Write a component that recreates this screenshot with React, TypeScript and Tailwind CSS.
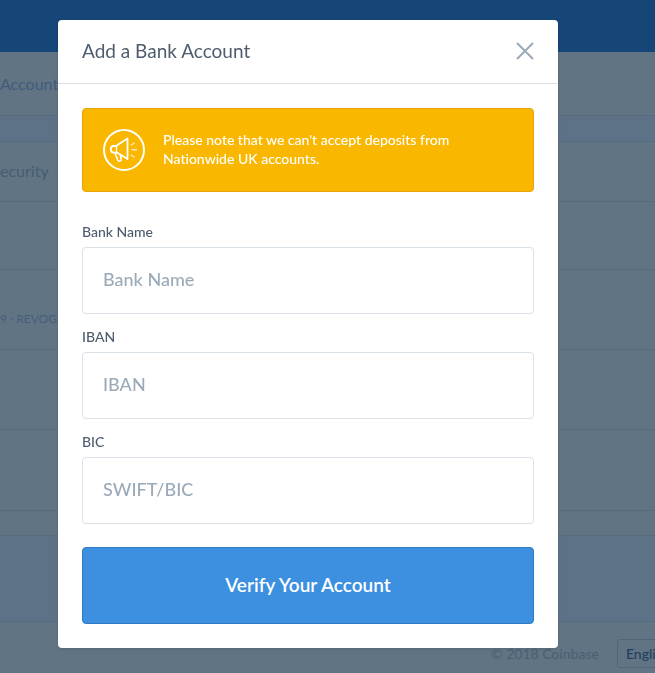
import React from 'react';

const fields = [
  { id: 'bank-name', label: 'Bank Name', placeholder: 'Bank Name' },
  { id: 'iban', label: 'IBAN', placeholder: 'IBAN' },
  { id: 'bic', label: 'BIC', placeholder: 'SWIFT/BIC' },
];

function MegaphoneIcon() {
  return (
    <svg className="size-[42px] shrink-0" viewBox="0 0 42 42" fill="none" stroke="white" strokeLinecap="round" strokeLinejoin="round" aria-hidden="true">
      <circle cx="21" cy="21" r="20" strokeWidth="2" />
      <path d="M13 17h-2.200a3 3 0 0 0-3 3v.6a3 3 0 0 0 3 3H14l10.500 6.400V9.500L13 17Z" strokeWidth="1.800" />
      <path d="M13.500 17v6.600" strokeWidth="1.300" />
      <path d="m12 24 2.600 6.800c1 2.200 4 1.500 3.600-1L17.200 25.500" strokeWidth="1.600" />
      <path d="m28 16 3.300-2M29 20.800h4.500M28 26l3.300 2" strokeWidth="1.400" strokeOpacity=".75" />
    </svg>
  );
}

function AccountsPage() {
  return (
    <div className="flex h-screen flex-col overflow-hidden bg-[#5d7286]">
      <header className="h-[52px] shrink-0 bg-[#154677]" />
      <nav className="flex h-16 shrink-0 items-center border-b border-[#566b80] bg-[#617484] text-base text-[#3f5c7a]">
        <a href="#accounts">Account</a>
      </nav>
      <main className="mt-[25px] shrink-0 border-y border-[#566b7e] bg-[#617484] text-[#465d74]">
        <h2 className="flex h-[60px] items-center border-b border-[#566b7e] pb-[2px] text-base">ecurity</h2>
        <div className="h-[68px] border-b border-[#566b7e]" />
        <p className="flex h-20 items-center border-b border-[#566b7e] pt-[18px] text-xs whitespace-nowrap text-[#455f7b]">9 · REVOGB21</p>
        <div className="h-20 border-b border-[#566b7e]" />
        <div className="h-[81px] border-b border-[#566b7e]" />
        <div className="h-6" />
      </main>
      <footer className="mt-[85px] flex flex-1 items-center gap-[18px] border-t border-[#566b80] bg-[#617484] pt-3 pl-[491px] whitespace-nowrap">
        <span className="text-[14px] font-medium text-[#4b6074]">© 2018 Coinbase</span>
        <select aria-label="Language" className="h-[29px] w-[120px] shrink-0 appearance-none rounded-[3px] border border-[#506579] px-2 text-[14px] font-medium text-[#243f5d]">
          <option>English</option>
        </select>
      </footer>
    </div>
  );
}

function BankAccountDialog() {
  return (
    <div className="fixed inset-0 overflow-hidden pt-5 pr-4 pl-[58px]">
      <section role="dialog" aria-modal="true" aria-labelledby="dialog-title" className="w-full max-w-[500px] rounded-[4px] bg-white shadow-sm">
        <header className="flex h-16 items-center justify-between border-b border-[#dae1e9] px-6 pb-px">
          <h1 id="dialog-title" className="text-[19px] text-[#4e5c6e]">Add a Bank Account</h1>
          <button type="button" aria-label="Close">
            <svg className="size-[18px]" viewBox="0 0 18 18" stroke="#9baab8" strokeWidth="2" aria-hidden="true">
              <path d="m1 1 16 16M17 1 1 17" />
            </svg>
          </button>
        </header>
        <form className="p-6" onSubmit={(event) => event.preventDefault()}>
          <div role="alert" className="flex h-[84px] items-center gap-[18px] rounded-[4px] border border-[#e8a30c] bg-[#f9b700] px-5 text-white">
            <MegaphoneIcon />
            <p className="max-w-[310px] pb-[2px] text-[14px] leading-[19px] font-medium">Please note that we can't accept deposits from Nationwide UK accounts.</p>
          </div>
          <div className="mt-[31px] flex flex-col gap-[14px]">
            {fields.map((field) => (
              <div key={field.id} className="flex flex-col gap-[6px]">
                <label htmlFor={field.id} className="text-[14px] leading-[18px] font-medium text-[#4e5c6e]">{field.label}</label>
                <input id={field.id} type="text" placeholder={field.placeholder} className="h-[67px] w-full rounded-[4px] border border-[#dae1e9] px-5 pb-[3px] text-[18px] font-medium text-[#4e5c6e] placeholder:text-[#9baab8]" />
              </div>
            ))}
          </div>
          <button type="submit" className="mt-[23px] h-[77px] w-full rounded-[4px] border border-[#2e7bc4] bg-[#3c90df] text-[19px] font-semibold text-white">Verify Your Account</button>
        </form>
      </section>
    </div>
  );
}

export default function App() {
  return (
    <div className="font-['Lato',sans-serif] [font-variant-ligatures:none]">
      <AccountsPage />
      <BankAccountDialog />
    </div>
  );
}
